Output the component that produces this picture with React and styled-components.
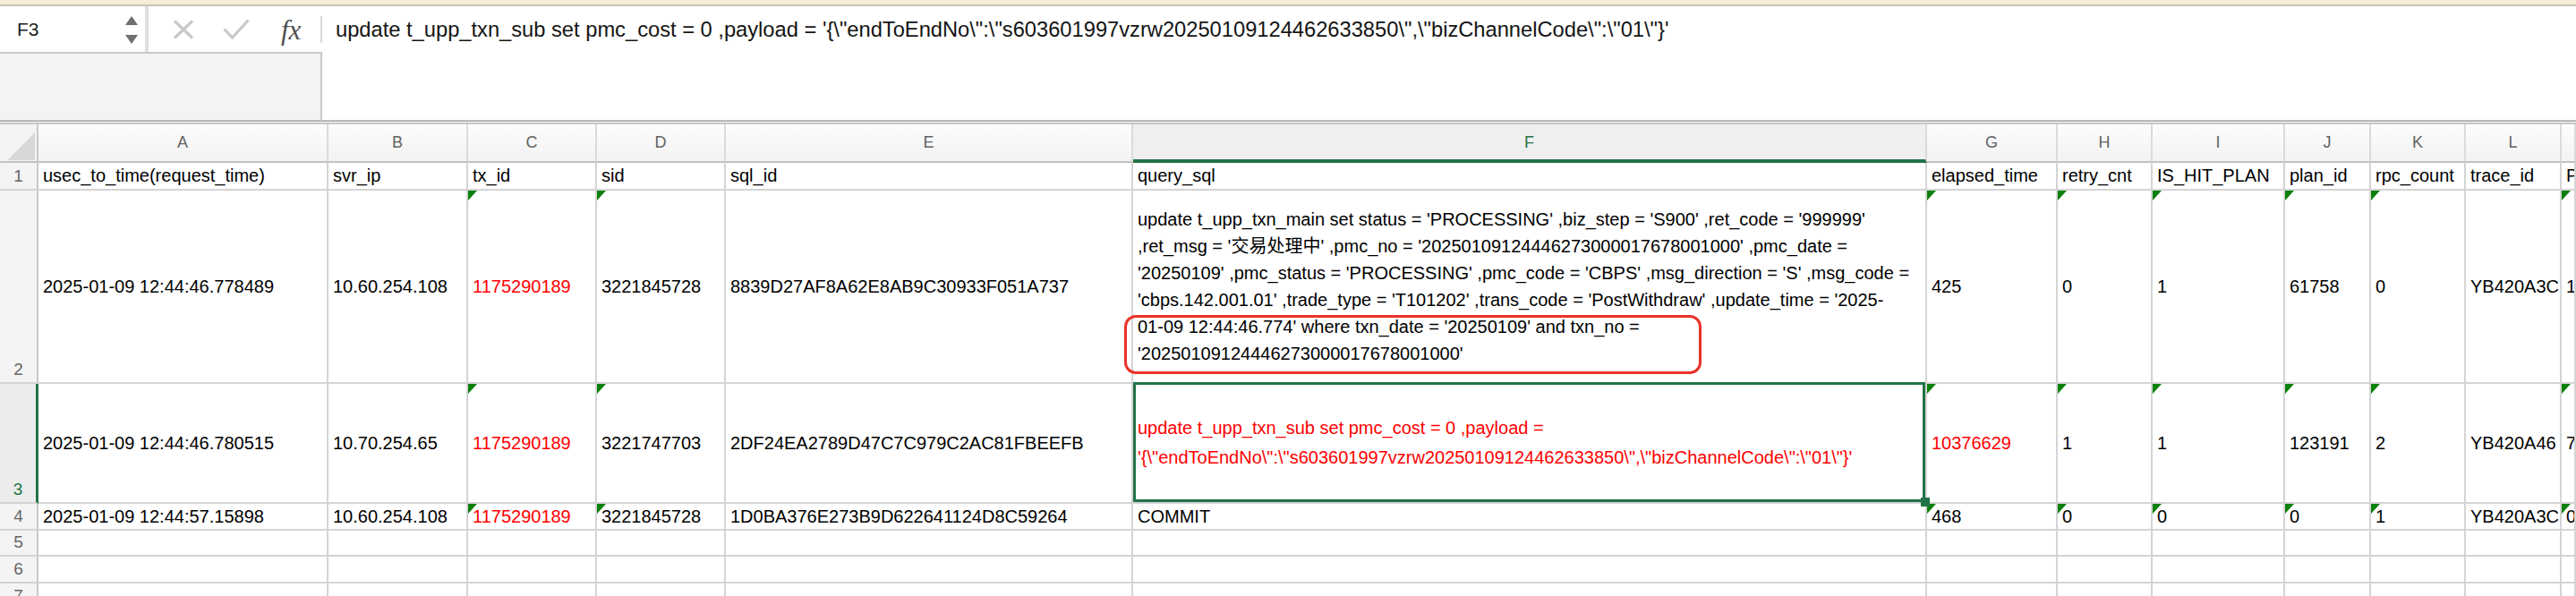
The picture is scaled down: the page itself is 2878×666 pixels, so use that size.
import React from "react";
import styled, { createGlobalStyle, css } from "styled-components";

const GlobalStyle = createGlobalStyle`
  html, body {
    margin: 0;
    padding: 0;
    background: #ffffff;
  }
  body {
    width: 2878px;
    height: 666px;
    overflow: hidden;
    font-family: "Liberation Sans", "Noto Sans CJK SC", Arial, sans-serif;
  }
`;

const GREEN = "#217346";
const GRID = "#d4d4d4";

const Window = styled.div`
  display: flex;
  flex-direction: column;
  width: 2878px;
  height: 666px;
  overflow: hidden;
  & > * {
    flex-shrink: 0;
  }
`;

const TitleStrip = styled.div`
  height: 5px;
  background: #f6ecd7;
  border-bottom: 2px solid #c9c3b6;
`;

const FormulaBar = styled.div`
  display: flex;
  height: 127px;
`;

const LeftPane = styled.div`
  display: flex;
  flex-direction: column;
  width: 360px;
`;

const TopRow = styled.div`
  display: flex;
  height: 51px;
`;

const NameBox = styled.div`
  display: flex;
  align-items: center;
  justify-content: space-between;
  box-sizing: border-box;
  width: 166px;
  padding: 0 8px 0 19px;
  border-right: 4px solid #dedede;
  font-size: 21px;
  color: #1f1f1f;
`;

const Spinner = styled.div`
  display: flex;
  flex-direction: column;
  gap: 11px;
  margin-top: 2px;
`;

const Buttons = styled.div`
  display: flex;
  align-items: center;
  flex: 1;
  padding-left: 27px;
`;

const Fx = styled.span`
  margin-left: 35px;
  font-family: "Liberation Serif", "DejaVu Serif", serif;
  font-style: italic;
  font-size: 31px;
  color: #4d4d4d;
  line-height: 1;
  margin-top: 2px;
`;

const Separator = styled.div`
  margin-left: auto;
  width: 2px;
  height: 30px;
  background: #d8d8d8;
`;

const GrayArea = styled.div`
  flex: 1;
  background: #f3f3f3;
  border-top: 2px solid #c8c8c8;
  border-right: 2px solid #c8c8c8;
`;

const FormulaText = styled.div`
  flex: 1;
  padding: 11px 0 0 15px;
  font-size: 23.7px;
  line-height: 30px;
  color: #141414;
  white-space: nowrap;
`;

const BarDivider = styled.div`
  height: 1px;
  background: #ececec;
  border-top: 2px solid #b9b9b9;
  border-bottom: 2px solid #c9c9c9;
`;

const Sheet = styled.div`
  display: grid;
  grid-template-columns: ${(p) => p.$cols};
  grid-template-rows: ${(p) => p.$rows};
`;

const Corner = styled.div`
  position: relative;
  background: #f4f4f4;
  border-right: 2px solid #c9c9c9;
  border-bottom: 2px solid #c2c2c2;
  box-sizing: border-box;
  svg {
    position: absolute;
    left: 8px;
    top: 9px;
  }
`;

const ColHeader = styled.div`
  display: flex;
  align-items: center;
  justify-content: center;
  box-sizing: border-box;
  background: linear-gradient(#fdfdfd, #f2f2f2);
  border-right: 2px solid #dadada;
  border-bottom: 2px solid #c2c2c2;
  font-size: 18px;
  color: #626262;
  overflow: hidden;
  ${(p) =>
    p.$selected &&
    css`
      background: #efefef;
      color: ${GREEN};
      border-bottom: 4px solid ${GREEN};
      padding-top: 2px;
    `}
`;

const RowHeader = styled.div`
  display: flex;
  align-items: flex-end;
  justify-content: center;
  box-sizing: border-box;
  padding-bottom: 1px;
  background: #f4f4f4;
  border-right: 2px solid #c9c9c9;
  border-bottom: 2px solid ${GRID};
  font-size: 19px;
  line-height: 26px;
  color: #666666;
  ${(p) =>
    p.$selected &&
    css`
      background: #ececec;
      color: ${GREEN};
      border-right: 3px solid ${GREEN};
    `}
`;

const Cell = styled.div`
  position: relative;
  display: flex;
  align-items: center;
  box-sizing: border-box;
  min-width: 0;
  padding: 0 0 0 5px;
  border-right: 2px solid ${GRID};
  border-bottom: 2px solid ${GRID};
  font-size: 20px;
  color: ${(p) => (p.$red ? "#ff0000" : "#000000")};
  white-space: nowrap;
  overflow: ${(p) => (p.$overlay ? "visible" : "hidden")};

  ${(p) =>
    p.$flag &&
    css`
      &::before {
        content: "";
        position: absolute;
        left: 0;
        top: 0;
        width: 10px;
        height: 11px;
        background: #0c800c;
        clip-path: polygon(0 0, 100% 0, 0 100%);
        z-index: 1;
      }
    `}

  ${(p) =>
    p.$selected &&
    css`
      z-index: 2;
      &::after {
        content: "";
        position: absolute;
        left: 0;
        top: -2px;
        right: 0;
        bottom: 0;
        border: 3px solid ${GREEN};
        pointer-events: none;
      }
    `}
`;

const Lines = styled.div`
  display: flex;
  flex-direction: column;
  line-height: ${(p) => p.$lh}px;
`;

const FillHandle = styled.span`
  position: absolute;
  right: -5px;
  bottom: -5px;
  width: 10px;
  height: 10px;
  background: ${GREEN};
  z-index: 3;
`;

const Annotation = styled.span`
  position: absolute;
  left: -10px;
  top: 139px;
  width: 645px;
  height: 66px;
  box-sizing: border-box;
  border: 3px solid #ea3229;
  border-radius: 13px;
  pointer-events: none;
`;

const cols = [
  { id: "A", w: 324 },
  { id: "B", w: 156 },
  { id: "C", w: 144 },
  { id: "D", w: 144 },
  { id: "E", w: 455 },
  { id: "F", w: 887 },
  { id: "G", w: 146 },
  { id: "H", w: 106 },
  { id: "I", w: 148 },
  { id: "J", w: 96 },
  { id: "K", w: 106 },
  { id: "L", w: 107 },
  { id: "M", w: 16, hide: true },
];

const rowHeights = [31, 216, 134, 30, 29, 30, 30];
const flagged = ["C", "D", "G", "H", "I", "J", "K", "M"];

const formula = String.raw`update t_upp_txn_sub set pmc_cost = 0 ,payload = '{\"endToEndNo\":\"s603601997vzrw20250109124462633850\",\"bizChannelCode\":\"01\"}'`;

const mainSql = [
  "update t_upp_txn_main set status = 'PROCESSING' ,biz_step = 'S900' ,ret_code = '999999'",
  ",ret_msg = '交易处理中' ,pmc_no = '20250109124446273000017678001000' ,pmc_date =",
  "'20250109' ,pmc_status = 'PROCESSING' ,pmc_code = 'CBPS' ,msg_direction = 'S' ,msg_code =",
  "'cbps.142.001.01' ,trade_type = 'T101202' ,trans_code = 'PostWithdraw' ,update_time = '2025-",
  "01-09 12:44:46.774' where txn_date = '20250109' and txn_no =",
  "'20250109124446273000017678001000'",
];

const subSql = [
  "update t_upp_txn_sub set pmc_cost = 0 ,payload =",
  String.raw`'{\"endToEndNo\":\"s603601997vzrw20250109124462633850\",\"bizChannelCode\":\"01\"}'`,
];

const red = (t) => ({ t, red: true });

const rows = [
  [
    "usec_to_time(request_time)",
    "svr_ip",
    "tx_id",
    "sid",
    "sql_id",
    "query_sql",
    "elapsed_time",
    "retry_cnt",
    "IS_HIT_PLAN",
    "plan_id",
    "rpc_count",
    "trace_id",
    "P",
  ],
  [
    "2025-01-09 12:44:46.778489",
    "10.60.254.108",
    red("1175290189"),
    "3221845728",
    "8839D27AF8A62E8AB9C30933F051A737",
    { lines: mainSql, lh: 30, note: true },
    "425",
    "0",
    "1",
    "61758",
    "0",
    "YB420A3C15E2F",
    "1",
  ],
  [
    "2025-01-09 12:44:46.780515",
    "10.70.254.65",
    red("1175290189"),
    "3221747703",
    "2DF24EA2789D47C7C979C2AC81FBEEFB",
    { lines: subSql, lh: 33, red: true, selected: true },
    red("10376629"),
    "1",
    "1",
    "123191",
    "2",
    "YB420A46 1D1C7",
    "7",
  ],
  [
    "2025-01-09 12:44:57.15898",
    "10.60.254.108",
    red("1175290189"),
    "3221845728",
    "1D0BA376E273B9D622641124D8C59264",
    "COMMIT",
    "468",
    "0",
    "0",
    "0",
    "1",
    "YB420A3C15E2F",
    "0",
  ],
  [],
  [],
  [],
];

function XIcon() {
  return (
    <svg width="24" height="22" viewBox="0 0 24 22">
      <path d="M2 1.5 L22 20.5 M22 1.5 L2 20.5" stroke="#c9c9c9" strokeWidth="3.2" fill="none" />
    </svg>
  );
}

function CheckIcon() {
  return (
    <svg width="30" height="23" viewBox="0 0 30 23" style={{ marginLeft: 32 }}>
      <path d="M1.5 11.5 L10.5 21 L28.5 1.5" stroke="#c9c9c9" strokeWidth="3.2" fill="none" />
    </svg>
  );
}

function SpinArrows() {
  return (
    <Spinner>
      <svg width="14" height="10" viewBox="0 0 14 10">
        <path d="M7 0 L14 10 L0 10 Z" fill="#6f6f6f" />
      </svg>
      <svg width="14" height="10" viewBox="0 0 14 10">
        <path d="M0 0 L14 0 L7 10 Z" fill="#6f6f6f" />
      </svg>
    </Spinner>
  );
}

function CornerMark() {
  return (
    <svg width="31" height="31" viewBox="0 0 31 31">
      <path d="M31 0 L31 31 L0 31 Z" fill="#d8d8d8" />
    </svg>
  );
}

function renderCell(value, col, rowIndex) {
  const key = `${col.id}${rowIndex + 1}`;
  const flag = rowIndex >= 1 && rowIndex <= 3 && flagged.includes(col.id);
  if (value && value.lines) {
    return (
      <Cell key={key} $flag={flag} $red={value.red} $selected={value.selected} $overlay>
        <Lines $lh={value.lh}>
          {value.lines.map((l) => (
            <span key={l}>{l}</span>
          ))}
        </Lines>
        {value.note && <Annotation />}
        {value.selected && <FillHandle />}
      </Cell>
    );
  }
  const text = value && typeof value === "object" ? value.t : value;
  const isRed = value && typeof value === "object" && value.red;
  return (
    <Cell key={key} $flag={flag} $red={isRed}>
      {text}
    </Cell>
  );
}

export default function App() {
  const colTemplate = `43px ${cols.map((c) => `${c.w}px`).join(" ")}`;
  const rowTemplate = `43px ${rowHeights.map((h) => `${h}px`).join(" ")}`;

  return (
    <Window>
      <GlobalStyle />
      <TitleStrip />
      <FormulaBar>
        <LeftPane>
          <TopRow>
            <NameBox>
              <span>F3</span>
              <SpinArrows />
            </NameBox>
            <Buttons>
              <XIcon />
              <CheckIcon />
              <Fx>fx</Fx>
              <Separator />
            </Buttons>
          </TopRow>
          <GrayArea />
        </LeftPane>
        <FormulaText>{formula}</FormulaText>
      </FormulaBar>
      <BarDivider />
      <Sheet $cols={colTemplate} $rows={rowTemplate}>
        <Corner>
          <CornerMark />
        </Corner>
        {cols.map((c) => (
          <ColHeader key={c.id} $selected={c.id === "F"}>
            {c.hide ? "" : c.id}
          </ColHeader>
        ))}
        {rows.map((row, ri) => (
          <React.Fragment key={ri}>
            <RowHeader $selected={ri === 2}>{ri + 1}</RowHeader>
            {cols.map((c, ci) => renderCell(row[ci], c, ri))}
          </React.Fragment>
        ))}
      </Sheet>
    </Window>
  );
}
